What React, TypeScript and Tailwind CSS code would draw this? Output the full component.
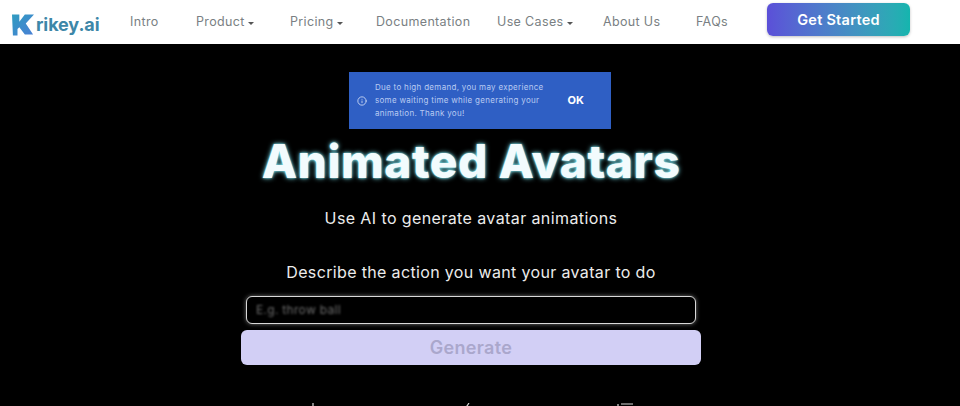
import { Info } from "lucide-react";

const font = "font-['Inter','Liberation_Sans',sans-serif]";

function NavItem({ label, caret, width }: { label: string; caret?: boolean; width: string }) {
  return (
    <div className={`mt-[1px] flex items-center gap-[3px] text-[12.5px] tracking-[0.35px] text-[#7a7f83] ${width}`}>
      <span>{label}</span>
      {caret && <span className="mt-[1px] h-0 w-0 border-x-[3px] border-t-[3px] border-x-transparent border-t-[#555]" />}
    </div>
  );
}

export default function App() {
  return (
    <div className={`flex h-[406px] w-[960px] flex-col overflow-hidden bg-black ${font}`}>
      <nav className="flex h-[44px] shrink-0 items-center bg-white pl-[12px]">
        <div className="mt-[5px] flex w-[118px] items-center">
          <svg width="22" height="23" viewBox="0 0 24 24" className="shrink-0">
            <defs>
              <linearGradient id="logo" x1="0" y1="0" x2="1" y2="1">
                <stop offset="0" stopColor="#2f9cc0" />
                <stop offset="1" stopColor="#4a7fd6" />
              </linearGradient>
            </defs>
            <path d="M0 1h8v8l6-8h10l-9 10 8 12h-9l-6-8-2 2v7H1z" fill="url(#logo)" />
          </svg>
          <span className="ml-[2px] text-[18px] font-bold tracking-[-0.1px] text-[#3d87a8]">rikey.ai</span>
        </div>
        <NavItem label="Intro" width="w-[66px]" />
        <NavItem label="Product" caret width="w-[94px]" />
        <NavItem label="Pricing" caret width="w-[86px]" />
        <NavItem label="Documentation" width="w-[121px]" />
        <NavItem label="Use Cases" caret width="w-[106px]" />
        <NavItem label="About Us" width="w-[93px]" />
        <NavItem label="FAQs" width="w-[71px]" />
        <button className="mb-[5px] h-[33px] w-[143px] rounded-[6px] bg-gradient-to-r from-[#5b4fd8] to-[#14b5ae] text-[14.5px] font-semibold tracking-[0.25px] text-white shadow-[0_1px_3px_rgba(0,0,0,0.25)]">
          Get Started
        </button>
      </nav>

      <main className="flex flex-col items-center text-white">
        <div className="mt-[28px] flex h-[57px] w-[262px] items-center bg-[#2f5fc4] pl-[8px] pr-[27px] shadow-[0_2px_6px_rgba(0,0,0,0.4)]">
          <Info size={10} className="shrink-0 text-[#d5e0f7]" />
          <p className="ml-[8px] w-[178px] text-[8px] leading-[13px] tracking-[0.3px] text-[#b9cbf2]">
            Due to high demand, you may experience some waiting time while generating your animation. Thank you!
          </p>
          <span className="ml-auto text-[11px] font-bold text-white">OK</span>
        </div>

        <div className="flex w-full flex-col items-center pr-[18px]">
          <h1 className="mt-[4px] text-[46px] font-extrabold leading-[56px] tracking-[0.6px] text-[#f2fbfd] [text-shadow:0_0_5px_#7fe6f2,0_0_2px_#7fe6f2]">
            Animated Avatars
          </h1>
          <p className="mt-[18px] text-[16px] leading-[22px] tracking-[0.4px] text-[#ececec]">Use AI to generate avatar animations</p>
          <p className="mt-[32px] text-[16px] leading-[22px] tracking-[0.35px] text-[#ececec]">Describe the action you want your avatar to do</p>

          <div className="mt-[13px] flex h-[28px] w-[450px] items-center rounded-[6px] border border-[#d8d8d8] bg-black pl-[9px] shadow-[0_0_4px_rgba(255,255,255,0.45)]">
            <span className="text-[12px] tracking-[0.3px] text-[#6c6c6c] blur-[1px]">E.g. throw ball</span>
          </div>
          <button className="mt-[6px] h-[35px] w-[460px] rounded-[6px] bg-[#d2cff5] text-[18px] font-semibold tracking-[0.3px] text-[#aaa7cc]">
            Generate
          </button>

          <div className="mt-[38px] flex w-[328px] justify-between text-[#d8d8d8]">
            <svg width="12" height="6" viewBox="0 0 12 6"><path d="M6 0v6M3 4h6" stroke="currentColor" strokeWidth="1.2" fill="none" /></svg>
            <svg width="12" height="6" viewBox="0 0 12 6"><path d="M7 0 3 6" stroke="currentColor" strokeWidth="1.2" fill="none" /></svg>
            <svg width="18" height="6" viewBox="0 0 18 6"><path d="M1 1v5M4 1h12" stroke="currentColor" strokeWidth="1.2" fill="none" /></svg>
          </div>
        </div>
      </main>
    </div>
  );
}
